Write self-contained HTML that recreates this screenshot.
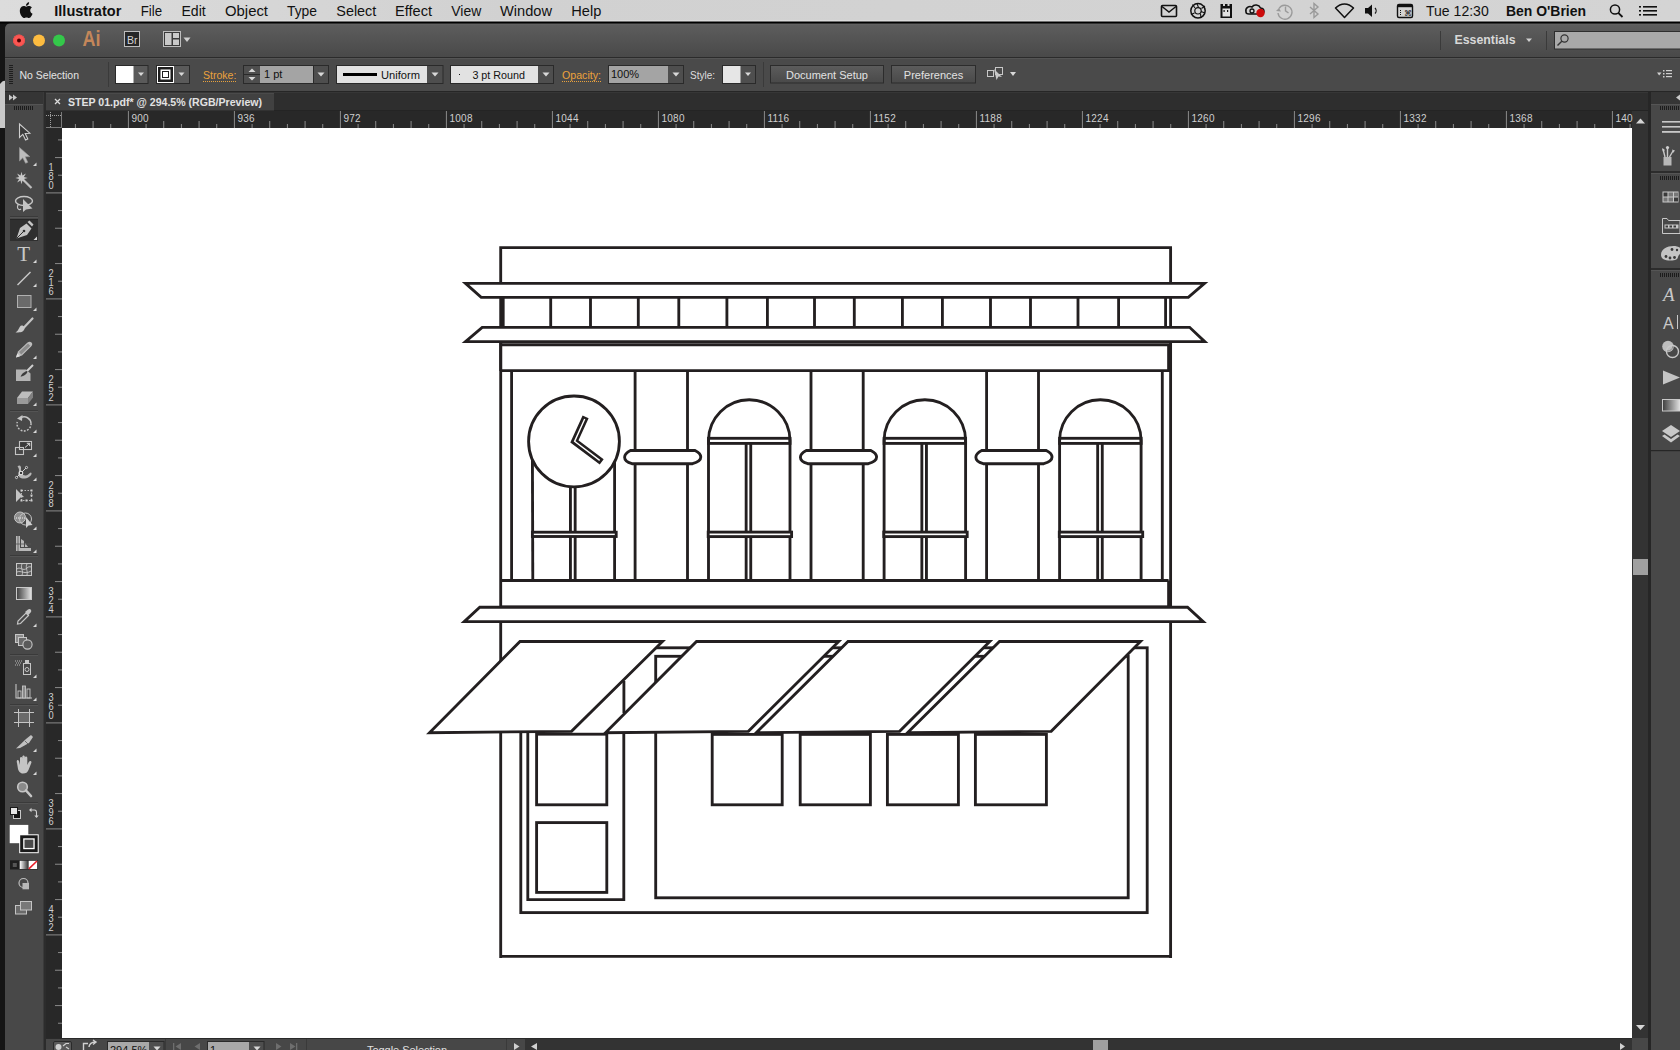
<!DOCTYPE html>
<html><head><meta charset="utf-8">
<style>
html,body{margin:0;padding:0;width:1680px;height:1050px;overflow:hidden;background:#141414;}
svg{display:block;position:absolute;left:0;top:0;font-family:"Liberation Sans",sans-serif;}

</style></head>
<body>
<svg width="1680" height="1050" viewBox="0 0 1680 1050" font-family="Liberation Sans, sans-serif">
<defs>
<linearGradient id="gMenu" x1="0" y1="0" x2="1" y2="0"><stop offset="0" stop-color="#dcdcdc"/><stop offset="0.3" stop-color="#d1d1d1"/><stop offset="1" stop-color="#d4d4d4"/></linearGradient>
<linearGradient id="gApp" x1="0" y1="0" x2="0" y2="1"><stop offset="0" stop-color="#5e5e5e"/><stop offset="1" stop-color="#494949"/></linearGradient>
<linearGradient id="gBtn" x1="0" y1="0" x2="0" y2="1"><stop offset="0" stop-color="#5c5c5c"/><stop offset="1" stop-color="#494949"/></linearGradient>
</defs>
<g id="chrome">
<rect x="0" y="22" width="1680" height="1028" fill="#151515"/><path d="M0,84 Q3,80 5,81 V128 H0 Z" fill="#c9c9c9"/>
<path d="M5,30 Q5,23 12,23 H1680 V1050 H5 Z" fill="#474747"/>
<path d="M5,30 Q5,23 12,23 H1680 V57 H5 Z" fill="url(#gApp)"/><rect x="10" y="23.5" width="1670" height="1" fill="#6a6a6a" opacity="0.6"/>
<rect x="5" y="57" width="1675" height="1" fill="#2b2b2b"/>
<!-- traffic lights -->
<circle cx="19" cy="40.5" r="6" fill="#fc605c"/>
<circle cx="19" cy="40.5" r="5.5" fill="#fc5753" stroke="#df4744" stroke-width="0.6"/>
<circle cx="19" cy="40.5" r="2" fill="#4d0000"/>
<circle cx="39" cy="40.5" r="6" fill="#fdbc40"/>
<circle cx="59" cy="40.5" r="6" fill="#34c84a"/>
<!-- Ai logo -->
<text x="82.5" y="46.3" font-size="22" fill="#c4875a" font-weight="bold" textLength="18" lengthAdjust="spacingAndGlyphs">Ai</text>
<!-- Br -->
<rect x="124.5" y="31.5" width="15" height="15" fill="#272727" stroke="#bdbdbd" stroke-width="1"/>
<text x="127" y="43.5" font-size="10.5" fill="#d6d6d6">Br</text>
<!-- layout icon -->
<rect x="163.5" y="31.5" width="17" height="15" fill="#3a3a3a" stroke="#bdbdbd" stroke-width="1"/>
<rect x="165" y="33" width="6.5" height="12" fill="#c9c9c9"/>
<rect x="173" y="33" width="6" height="5" fill="#c9c9c9"/>
<rect x="173" y="39.5" width="6" height="5.5" fill="#c9c9c9"/>
<path d="M183.5,37.5 H190.5 L187,42 Z" fill="#d0d0d0"/>
<!-- right app bar -->
<rect x="1440" y="31" width="1" height="19" fill="#3a3a3a"/>
<text x="1454.5" y="44" font-size="12.5" font-weight="bold" fill="#d8d8d8" textLength="61" lengthAdjust="spacingAndGlyphs">Essentials</text>
<path d="M1526,38.5 H1532 L1529,42 Z" fill="#d0d0d0"/>
<rect x="1546" y="31" width="1" height="19" fill="#3a3a3a"/>
<rect x="1554.5" y="31.5" width="130" height="17.5" fill="#a9a9a9" stroke="#2e2e2e" stroke-width="1"/>
<circle cx="1564.5" cy="38.5" r="3.6" fill="none" stroke="#333" stroke-width="1.2"/>
<path d="M1561.8,41.2 L1557.5,45.5" stroke="#333" stroke-width="1.4"/>

<!-- control bar -->
<rect x="5" y="58" width="1675" height="33" fill="#4a4a4a"/>
<rect x="5" y="58" width="1675" height="1" fill="#545454"/>
<rect x="5" y="91" width="1675" height="1" fill="#262626"/>
<g fill="#1e1e1e"><rect x="9" y="65" width="4" height="1"/><rect x="9" y="67" width="4" height="1"/><rect x="9" y="69" width="4" height="1"/><rect x="9" y="71" width="4" height="1"/><rect x="9" y="73" width="4" height="1"/><rect x="9" y="75" width="4" height="1"/><rect x="9" y="77" width="4" height="1"/><rect x="9" y="79" width="4" height="1"/><rect x="9" y="81" width="4" height="1"/><rect x="9" y="83" width="4" height="1"/></g>
<text x="19.5" y="78.5" font-size="11" fill="#e4e4e4" textLength="59.5" lengthAdjust="spacingAndGlyphs">No Selection</text>
<rect x="108" y="62" width="1" height="25" fill="#3a3a3a"/>
<!-- fill swatch -->
<rect x="115.5" y="65.5" width="32.5" height="18" fill="#5a5a5a" stroke="#2a2a2a" stroke-width="1"/>
<rect x="116" y="66" width="17.5" height="17" fill="#ffffff"/>
<path d="M138,72.5 H144 L141,76 Z" fill="#d8d8d8"/>
<!-- stroke swatch -->
<rect x="156.5" y="65.5" width="33" height="18" fill="#5a5a5a" stroke="#2a2a2a" stroke-width="1"/>
<rect x="157" y="66" width="17" height="17" fill="#ffffff"/>
<rect x="158" y="67" width="15" height="15" fill="#1e1e1e"/>
<rect x="160.5" y="69.5" width="10" height="10" fill="#ffffff"/>
<rect x="162" y="71" width="7" height="7" fill="#1e1e1e"/>
<rect x="163" y="72" width="5" height="5" fill="#ffffff"/>
<path d="M178.5,72.5 H184.5 L181.5,76 Z" fill="#d8d8d8"/>
<!-- Stroke label -->
<text x="203" y="78.5" font-size="11" fill="#eaa23c" textLength="33.4" lengthAdjust="spacingAndGlyphs">Stroke:</text>
<line x1="203" y1="81.5" x2="236" y2="81.5" stroke="#eaa23c" stroke-width="1" stroke-dasharray="1,1"/>
<rect x="243.5" y="65.5" width="85" height="18" fill="#4e4e4e" stroke="#2a2a2a" stroke-width="1"/>
<rect x="260" y="66" width="53" height="17" fill="#a4a4a4"/>
<path d="M248.5,72 H255.5 L252,68.5 Z" fill="#d6d6d6"/>
<path d="M248.5,77 H255.5 L252,80.5 Z" fill="#d6d6d6"/>
<rect x="244" y="74" width="16" height="1" fill="#2a2a2a"/>
<rect x="313" y="66" width="1" height="17" fill="#2a2a2a"/>
<text x="264" y="78" font-size="11" fill="#111">1 pt</text>
<path d="M317.5,72.5 H324.5 L321,76.5 Z" fill="#d8d8d8"/>
<!-- Uniform -->
<rect x="336.5" y="65.5" width="106.5" height="18" fill="#4e4e4e" stroke="#2a2a2a" stroke-width="1"/>
<rect x="337" y="66" width="90" height="17" fill="#e2e2e2"/>
<rect x="343" y="73" width="34" height="3" fill="#000"/>
<text x="381" y="78.5" font-size="11" fill="#111" textLength="39" lengthAdjust="spacingAndGlyphs">Uniform</text>
<path d="M431.5,72.5 H438.5 L435,76.5 Z" fill="#d8d8d8"/>
<!-- 3 pt Round -->
<rect x="450.5" y="65.5" width="103" height="18" fill="#4e4e4e" stroke="#2a2a2a" stroke-width="1"/>
<rect x="451" y="66" width="87" height="17" fill="#e2e2e2"/>
<rect x="459" y="74" width="1" height="1" fill="#111"/>
<text x="472.4" y="78.5" font-size="11" fill="#111" textLength="52.6" lengthAdjust="spacingAndGlyphs">3 pt Round</text>
<path d="M542.5,72.5 H549.5 L546,76.5 Z" fill="#d8d8d8"/>
<!-- Opacity -->
<text x="562" y="78.5" font-size="11" fill="#eaa23c" textLength="39" lengthAdjust="spacingAndGlyphs">Opacity:</text>
<line x1="562" y1="81.5" x2="601" y2="81.5" stroke="#eaa23c" stroke-width="1" stroke-dasharray="1,1"/>
<rect x="608.5" y="65.5" width="75" height="18" fill="#4e4e4e" stroke="#2a2a2a" stroke-width="1"/>
<rect x="609" y="66" width="59" height="17" fill="#a4a4a4"/>
<text x="611" y="78" font-size="11" fill="#111">100%</text>
<path d="M672.5,72.5 H679.5 L676,76.5 Z" fill="#d8d8d8"/>
<!-- Style -->
<text x="690" y="78.5" font-size="11" fill="#dedede" textLength="25" lengthAdjust="spacingAndGlyphs">Style:</text>
<rect x="722.5" y="65.5" width="33" height="18" fill="#4e4e4e" stroke="#2a2a2a" stroke-width="1"/>
<rect x="723" y="66" width="17.5" height="17" fill="#e6e6e6"/>
<path d="M745,72.5 H751 L748,76 Z" fill="#d8d8d8"/>
<rect x="763" y="62" width="1" height="25" fill="#3a3a3a"/>
<!-- buttons -->
<rect x="770.5" y="65.5" width="113" height="17.5" fill="url(#gBtn)" stroke="#2c2c2c" stroke-width="1"/>
<text x="827" y="78.5" font-size="11" fill="#e2e2e2" text-anchor="middle">Document Setup</text>
<rect x="891.5" y="65.5" width="84" height="17.5" fill="url(#gBtn)" stroke="#2c2c2c" stroke-width="1"/>
<text x="933.5" y="78.5" font-size="11" fill="#e2e2e2" text-anchor="middle">Preferences</text>
<!-- isolate icon -->
<g stroke="#c8c8c8" stroke-width="1" fill="none"><rect x="987.5" y="70.5" width="6" height="6"/><rect x="995.5" y="67.5" width="7" height="7"/></g>
<path d="M994,69 L1002,77 L998.5,76.5 L996.5,80 Z" fill="#c8c8c8"/>
<path d="M1010,72 H1016 L1013,76 Z" fill="#d8d8d8"/>
<!-- panel menu icon right -->
<path d="M1657,72.5 H1661.5 L1659.2,75.5 Z" fill="#cfcfcf"/>
<g fill="#cfcfcf"><rect x="1663" y="70" width="1.5" height="1.5"/><rect x="1663" y="73" width="1.5" height="1.5"/><rect x="1663" y="76" width="1.5" height="1.5"/><rect x="1666" y="70" width="6" height="1.2"/><rect x="1666" y="73" width="6" height="1.2"/><rect x="1666" y="76" width="6" height="1.2"/></g>

<!-- tab row -->
<rect x="5" y="92" width="1675" height="19" fill="#2e2e2e"/><rect x="46" y="92" width="1602" height="1" fill="#363636"/><rect x="46" y="110" width="1602" height="1" fill="#242424"/>
<rect x="46" y="93" width="228" height="17.5" fill="#414141"/><rect x="46" y="93" width="228" height="1" fill="#4a4a4a"/>
<path d="M55,99 L60,104 M60,99 L55,104" stroke="#dcdcdc" stroke-width="1.3"/>
<text x="68" y="105.5" font-size="11" font-weight="bold" fill="#e2e2e2" textLength="194" lengthAdjust="spacingAndGlyphs">STEP 01.pdf* @ 294.5% (RGB/Preview)</text>

<!-- left toolbar -->
<rect x="5" y="92" width="38" height="958" fill="#484848"/>
<rect x="5" y="92" width="38" height="12" fill="#353535"/>
<rect x="5" y="104" width="38" height="1" fill="#545454"/>
<path d="M9,94.5 L13,97.5 L9,100.5 Z M13,94.5 L17,97.5 L13,100.5 Z" fill="#c9c9c9"/>
<g fill="#1c1c1c"><rect x="14" y="106" width="1" height="4"/><rect x="16" y="106" width="1" height="4"/><rect x="18" y="106" width="1" height="4"/><rect x="20" y="106" width="1" height="4"/><rect x="22" y="106" width="1" height="4"/><rect x="24" y="106" width="1" height="4"/><rect x="26" y="106" width="1" height="4"/><rect x="28" y="106" width="1" height="4"/><rect x="30" y="106" width="1" height="4"/><rect x="32" y="106" width="1" height="4"/></g>
<rect x="43" y="92" width="3" height="958" fill="#2c2c2c"/>
<rect x="43" y="92" width="1" height="958" fill="#3a3a3a"/>

<!-- rulers -->
<rect x="46" y="111" width="1586" height="17" fill="#282828"/>
<rect x="46" y="111" width="16" height="927" fill="#282828"/>
<!-- canvas -->
<rect x="62" y="128" width="1570" height="910" fill="#ffffff"/>
<!-- right scrollbar -->
<rect x="1632" y="127" width="16" height="911" fill="#333333"/>
<rect x="1632" y="111" width="16" height="16" fill="#333333"/>
<path d="M1636,123.5 H1645 L1640.5,118.5 Z" fill="#d6d6d6"/>
<rect x="1633" y="559" width="15" height="16" fill="#a0a0a0"/>
<path d="M1636,1025 H1645 L1640.5,1030 Z" fill="#d6d6d6"/>
<rect x="1648" y="92" width="3" height="958" fill="#262626"/>
<!-- right dock -->
<rect x="1651" y="92" width="29" height="958" fill="#484848"/>
<rect x="1651" y="92" width="29" height="12" fill="#353535"/>
<path d="M1680,94.5 L1676,97.5 L1680,100.5 Z" fill="#c9c9c9"/>
<!-- status bar -->
<rect x="46" y="1038" width="1602" height="12" fill="#474747"/>
<rect x="46" y="1038" width="1602" height="1" fill="#2a2a2a"/>
<rect x="525" y="1039" width="1107" height="11" fill="#333333"/>
<rect x="1093" y="1040" width="15" height="10" fill="#a0a0a0"/>
<path d="M1620,1043 V1050 L1625,1046.5 Z" fill="#d0d0d0"/>
<path d="M537,1043 V1050 L531,1046.5 Z" fill="#d0d0d0"/>
<rect x="1632" y="1038" width="16" height="12" fill="#474747"/>
<!-- status items -->
<rect x="53.5" y="1041.5" width="18" height="10" rx="1.5" fill="#5a5a5a" stroke="#2a2a2a" stroke-width="1"/>
<circle cx="58.5" cy="1047" r="3" fill="#d0d0d0"/><path d="M63,1046 L66,1043.5 M66,1043.5 H69 M66,1047 L69,1049" stroke="#d0d0d0" stroke-width="1.2"/>
<path d="M83.5,1050 V1043.5 H88 M89,1047 C89,1044 92,1042 95,1042 M93,1040 L96,1042 L93,1044.5" fill="none" stroke="#d0d0d0" stroke-width="1.4"/>
<rect x="107.5" y="1041.5" width="56.5" height="10" fill="#4e4e4e" stroke="#2a2a2a" stroke-width="1"/>
<rect x="108" y="1042" width="41" height="9" fill="#a8a8a8"/>
<text x="110" y="1054" font-size="11" fill="#111">294.5%</text>
<path d="M153.5,1046.5 H160.5 L157,1050.5 Z" fill="#d8d8d8"/>
<rect x="165" y="1039" width="1" height="11" fill="#3a3a3a"/>
<g fill="#6e6e6e"><rect x="173" y="1043" width="1.3" height="7"/><path d="M181,1043 V1050 L175.5,1046.5 Z"/><path d="M200,1043 V1050 L194.5,1046.5 Z"/><path d="M276,1043 V1050 L281.5,1046.5 Z"/><path d="M290,1043 V1050 L295.5,1046.5 Z"/><rect x="296" y="1043" width="1.3" height="7"/></g>
<rect x="207.5" y="1041.5" width="56.5" height="10" fill="#4e4e4e" stroke="#2a2a2a" stroke-width="1"/>
<rect x="208" y="1042" width="41" height="9" fill="#a8a8a8"/>
<text x="210" y="1054" font-size="11" fill="#111">1</text>
<path d="M253.5,1046.5 H260.5 L257,1050.5 Z" fill="#d8d8d8"/>
<rect x="306" y="1039" width="1" height="11" fill="#3a3a3a"/>
<text x="367" y="1054" font-size="11" fill="#e0e0e0" textLength="80">Toggle Selection</text>
<rect x="506" y="1039" width="1" height="11" fill="#3a3a3a"/>
<path d="M514,1043 V1050 L519.5,1046.5 Z" fill="#d0d0d0"/>
</g>
<g id="rulers">
<rect x="74.90" y="124" width="1" height="4" fill="#8a8a8a"/>
<rect x="92.57" y="121" width="1" height="7" fill="#8a8a8a"/>
<rect x="110.23" y="124" width="1" height="4" fill="#8a8a8a"/>
<rect x="127.90" y="111" width="1" height="17" fill="#8a8a8a"/>
<rect x="145.57" y="124" width="1" height="4" fill="#8a8a8a"/>
<rect x="163.23" y="121" width="1" height="7" fill="#8a8a8a"/>
<rect x="180.90" y="124" width="1" height="4" fill="#8a8a8a"/>
<rect x="198.57" y="121" width="1" height="7" fill="#8a8a8a"/>
<rect x="216.23" y="124" width="1" height="4" fill="#8a8a8a"/>
<text x="131.4" y="122" font-size="10" fill="#cfcfcf" letter-spacing="0.3">900</text>
<rect x="233.90" y="111" width="1" height="17" fill="#8a8a8a"/>
<rect x="251.57" y="124" width="1" height="4" fill="#8a8a8a"/>
<rect x="269.23" y="121" width="1" height="7" fill="#8a8a8a"/>
<rect x="286.90" y="124" width="1" height="4" fill="#8a8a8a"/>
<rect x="304.57" y="121" width="1" height="7" fill="#8a8a8a"/>
<rect x="322.23" y="124" width="1" height="4" fill="#8a8a8a"/>
<text x="237.4" y="122" font-size="10" fill="#cfcfcf" letter-spacing="0.3">936</text>
<rect x="339.90" y="111" width="1" height="17" fill="#8a8a8a"/>
<rect x="357.57" y="124" width="1" height="4" fill="#8a8a8a"/>
<rect x="375.23" y="121" width="1" height="7" fill="#8a8a8a"/>
<rect x="392.90" y="124" width="1" height="4" fill="#8a8a8a"/>
<rect x="410.57" y="121" width="1" height="7" fill="#8a8a8a"/>
<rect x="428.23" y="124" width="1" height="4" fill="#8a8a8a"/>
<text x="343.4" y="122" font-size="10" fill="#cfcfcf" letter-spacing="0.3">972</text>
<rect x="445.90" y="111" width="1" height="17" fill="#8a8a8a"/>
<rect x="463.57" y="124" width="1" height="4" fill="#8a8a8a"/>
<rect x="481.23" y="121" width="1" height="7" fill="#8a8a8a"/>
<rect x="498.90" y="124" width="1" height="4" fill="#8a8a8a"/>
<rect x="516.57" y="121" width="1" height="7" fill="#8a8a8a"/>
<rect x="534.23" y="124" width="1" height="4" fill="#8a8a8a"/>
<text x="449.4" y="122" font-size="10" fill="#cfcfcf" letter-spacing="0.3">1008</text>
<rect x="551.90" y="111" width="1" height="17" fill="#8a8a8a"/>
<rect x="569.57" y="124" width="1" height="4" fill="#8a8a8a"/>
<rect x="587.23" y="121" width="1" height="7" fill="#8a8a8a"/>
<rect x="604.90" y="124" width="1" height="4" fill="#8a8a8a"/>
<rect x="622.57" y="121" width="1" height="7" fill="#8a8a8a"/>
<rect x="640.23" y="124" width="1" height="4" fill="#8a8a8a"/>
<text x="555.4" y="122" font-size="10" fill="#cfcfcf" letter-spacing="0.3">1044</text>
<rect x="657.90" y="111" width="1" height="17" fill="#8a8a8a"/>
<rect x="675.57" y="124" width="1" height="4" fill="#8a8a8a"/>
<rect x="693.23" y="121" width="1" height="7" fill="#8a8a8a"/>
<rect x="710.90" y="124" width="1" height="4" fill="#8a8a8a"/>
<rect x="728.57" y="121" width="1" height="7" fill="#8a8a8a"/>
<rect x="746.23" y="124" width="1" height="4" fill="#8a8a8a"/>
<text x="661.4" y="122" font-size="10" fill="#cfcfcf" letter-spacing="0.3">1080</text>
<rect x="763.90" y="111" width="1" height="17" fill="#8a8a8a"/>
<rect x="781.57" y="124" width="1" height="4" fill="#8a8a8a"/>
<rect x="799.23" y="121" width="1" height="7" fill="#8a8a8a"/>
<rect x="816.90" y="124" width="1" height="4" fill="#8a8a8a"/>
<rect x="834.57" y="121" width="1" height="7" fill="#8a8a8a"/>
<rect x="852.23" y="124" width="1" height="4" fill="#8a8a8a"/>
<text x="767.4" y="122" font-size="10" fill="#cfcfcf" letter-spacing="0.3">1116</text>
<rect x="869.90" y="111" width="1" height="17" fill="#8a8a8a"/>
<rect x="887.57" y="124" width="1" height="4" fill="#8a8a8a"/>
<rect x="905.23" y="121" width="1" height="7" fill="#8a8a8a"/>
<rect x="922.90" y="124" width="1" height="4" fill="#8a8a8a"/>
<rect x="940.57" y="121" width="1" height="7" fill="#8a8a8a"/>
<rect x="958.23" y="124" width="1" height="4" fill="#8a8a8a"/>
<text x="873.4" y="122" font-size="10" fill="#cfcfcf" letter-spacing="0.3">1152</text>
<rect x="975.90" y="111" width="1" height="17" fill="#8a8a8a"/>
<rect x="993.57" y="124" width="1" height="4" fill="#8a8a8a"/>
<rect x="1011.23" y="121" width="1" height="7" fill="#8a8a8a"/>
<rect x="1028.90" y="124" width="1" height="4" fill="#8a8a8a"/>
<rect x="1046.57" y="121" width="1" height="7" fill="#8a8a8a"/>
<rect x="1064.23" y="124" width="1" height="4" fill="#8a8a8a"/>
<text x="979.4" y="122" font-size="10" fill="#cfcfcf" letter-spacing="0.3">1188</text>
<rect x="1081.90" y="111" width="1" height="17" fill="#8a8a8a"/>
<rect x="1099.57" y="124" width="1" height="4" fill="#8a8a8a"/>
<rect x="1117.23" y="121" width="1" height="7" fill="#8a8a8a"/>
<rect x="1134.90" y="124" width="1" height="4" fill="#8a8a8a"/>
<rect x="1152.57" y="121" width="1" height="7" fill="#8a8a8a"/>
<rect x="1170.23" y="124" width="1" height="4" fill="#8a8a8a"/>
<text x="1085.4" y="122" font-size="10" fill="#cfcfcf" letter-spacing="0.3">1224</text>
<rect x="1187.90" y="111" width="1" height="17" fill="#8a8a8a"/>
<rect x="1205.57" y="124" width="1" height="4" fill="#8a8a8a"/>
<rect x="1223.23" y="121" width="1" height="7" fill="#8a8a8a"/>
<rect x="1240.90" y="124" width="1" height="4" fill="#8a8a8a"/>
<rect x="1258.57" y="121" width="1" height="7" fill="#8a8a8a"/>
<rect x="1276.23" y="124" width="1" height="4" fill="#8a8a8a"/>
<text x="1191.4" y="122" font-size="10" fill="#cfcfcf" letter-spacing="0.3">1260</text>
<rect x="1293.90" y="111" width="1" height="17" fill="#8a8a8a"/>
<rect x="1311.57" y="124" width="1" height="4" fill="#8a8a8a"/>
<rect x="1329.23" y="121" width="1" height="7" fill="#8a8a8a"/>
<rect x="1346.90" y="124" width="1" height="4" fill="#8a8a8a"/>
<rect x="1364.57" y="121" width="1" height="7" fill="#8a8a8a"/>
<rect x="1382.23" y="124" width="1" height="4" fill="#8a8a8a"/>
<text x="1297.4" y="122" font-size="10" fill="#cfcfcf" letter-spacing="0.3">1296</text>
<rect x="1399.90" y="111" width="1" height="17" fill="#8a8a8a"/>
<rect x="1417.57" y="124" width="1" height="4" fill="#8a8a8a"/>
<rect x="1435.23" y="121" width="1" height="7" fill="#8a8a8a"/>
<rect x="1452.90" y="124" width="1" height="4" fill="#8a8a8a"/>
<rect x="1470.57" y="121" width="1" height="7" fill="#8a8a8a"/>
<rect x="1488.23" y="124" width="1" height="4" fill="#8a8a8a"/>
<text x="1403.4" y="122" font-size="10" fill="#cfcfcf" letter-spacing="0.3">1332</text>
<rect x="1505.90" y="111" width="1" height="17" fill="#8a8a8a"/>
<rect x="1523.57" y="124" width="1" height="4" fill="#8a8a8a"/>
<rect x="1541.23" y="121" width="1" height="7" fill="#8a8a8a"/>
<rect x="1558.90" y="124" width="1" height="4" fill="#8a8a8a"/>
<rect x="1576.57" y="121" width="1" height="7" fill="#8a8a8a"/>
<rect x="1594.23" y="124" width="1" height="4" fill="#8a8a8a"/>
<text x="1509.4" y="122" font-size="10" fill="#cfcfcf" letter-spacing="0.3">1368</text>
<rect x="1611.90" y="111" width="1" height="17" fill="#8a8a8a"/>
<rect x="1629.57" y="124" width="1" height="4" fill="#8a8a8a"/>
<text x="1615.4" y="122" font-size="10" fill="#cfcfcf" letter-spacing="0.3">140</text>
<rect x="58" y="139.40" width="4" height="1" fill="#8a8a8a"/>
<rect x="55" y="157.07" width="7" height="1" fill="#8a8a8a"/>
<rect x="58" y="174.73" width="4" height="1" fill="#8a8a8a"/>
<rect x="46" y="192.40" width="16" height="1" fill="#8a8a8a"/>
<rect x="58" y="210.07" width="4" height="1" fill="#8a8a8a"/>
<rect x="55" y="227.73" width="7" height="1" fill="#8a8a8a"/>
<rect x="58" y="245.40" width="4" height="1" fill="#8a8a8a"/>
<rect x="55" y="263.07" width="7" height="1" fill="#8a8a8a"/>
<rect x="58" y="280.73" width="4" height="1" fill="#8a8a8a"/>
<text transform="translate(48.6,170.80) scale(0.8,1)" font-size="11.6" fill="#cfcfcf">1</text>
<text transform="translate(48.6,179.95) scale(0.8,1)" font-size="11.6" fill="#cfcfcf">8</text>
<text transform="translate(48.6,189.10) scale(0.8,1)" font-size="11.6" fill="#cfcfcf">0</text>
<rect x="46" y="298.40" width="16" height="1" fill="#8a8a8a"/>
<rect x="58" y="316.07" width="4" height="1" fill="#8a8a8a"/>
<rect x="55" y="333.73" width="7" height="1" fill="#8a8a8a"/>
<rect x="58" y="351.40" width="4" height="1" fill="#8a8a8a"/>
<rect x="55" y="369.07" width="7" height="1" fill="#8a8a8a"/>
<rect x="58" y="386.73" width="4" height="1" fill="#8a8a8a"/>
<text transform="translate(48.6,276.80) scale(0.8,1)" font-size="11.6" fill="#cfcfcf">2</text>
<text transform="translate(48.6,285.95) scale(0.8,1)" font-size="11.6" fill="#cfcfcf">1</text>
<text transform="translate(48.6,295.10) scale(0.8,1)" font-size="11.6" fill="#cfcfcf">6</text>
<rect x="46" y="404.40" width="16" height="1" fill="#8a8a8a"/>
<rect x="58" y="422.07" width="4" height="1" fill="#8a8a8a"/>
<rect x="55" y="439.73" width="7" height="1" fill="#8a8a8a"/>
<rect x="58" y="457.40" width="4" height="1" fill="#8a8a8a"/>
<rect x="55" y="475.07" width="7" height="1" fill="#8a8a8a"/>
<rect x="58" y="492.73" width="4" height="1" fill="#8a8a8a"/>
<text transform="translate(48.6,382.80) scale(0.8,1)" font-size="11.6" fill="#cfcfcf">2</text>
<text transform="translate(48.6,391.95) scale(0.8,1)" font-size="11.6" fill="#cfcfcf">5</text>
<text transform="translate(48.6,401.10) scale(0.8,1)" font-size="11.6" fill="#cfcfcf">2</text>
<rect x="46" y="510.40" width="16" height="1" fill="#8a8a8a"/>
<rect x="58" y="528.07" width="4" height="1" fill="#8a8a8a"/>
<rect x="55" y="545.73" width="7" height="1" fill="#8a8a8a"/>
<rect x="58" y="563.40" width="4" height="1" fill="#8a8a8a"/>
<rect x="55" y="581.07" width="7" height="1" fill="#8a8a8a"/>
<rect x="58" y="598.73" width="4" height="1" fill="#8a8a8a"/>
<text transform="translate(48.6,488.80) scale(0.8,1)" font-size="11.6" fill="#cfcfcf">2</text>
<text transform="translate(48.6,497.95) scale(0.8,1)" font-size="11.6" fill="#cfcfcf">8</text>
<text transform="translate(48.6,507.10) scale(0.8,1)" font-size="11.6" fill="#cfcfcf">8</text>
<rect x="46" y="616.40" width="16" height="1" fill="#8a8a8a"/>
<rect x="58" y="634.07" width="4" height="1" fill="#8a8a8a"/>
<rect x="55" y="651.73" width="7" height="1" fill="#8a8a8a"/>
<rect x="58" y="669.40" width="4" height="1" fill="#8a8a8a"/>
<rect x="55" y="687.07" width="7" height="1" fill="#8a8a8a"/>
<rect x="58" y="704.73" width="4" height="1" fill="#8a8a8a"/>
<text transform="translate(48.6,594.80) scale(0.8,1)" font-size="11.6" fill="#cfcfcf">3</text>
<text transform="translate(48.6,603.95) scale(0.8,1)" font-size="11.6" fill="#cfcfcf">2</text>
<text transform="translate(48.6,613.10) scale(0.8,1)" font-size="11.6" fill="#cfcfcf">4</text>
<rect x="46" y="722.40" width="16" height="1" fill="#8a8a8a"/>
<rect x="58" y="740.07" width="4" height="1" fill="#8a8a8a"/>
<rect x="55" y="757.73" width="7" height="1" fill="#8a8a8a"/>
<rect x="58" y="775.40" width="4" height="1" fill="#8a8a8a"/>
<rect x="55" y="793.07" width="7" height="1" fill="#8a8a8a"/>
<rect x="58" y="810.73" width="4" height="1" fill="#8a8a8a"/>
<text transform="translate(48.6,700.80) scale(0.8,1)" font-size="11.6" fill="#cfcfcf">3</text>
<text transform="translate(48.6,709.95) scale(0.8,1)" font-size="11.6" fill="#cfcfcf">6</text>
<text transform="translate(48.6,719.10) scale(0.8,1)" font-size="11.6" fill="#cfcfcf">0</text>
<rect x="46" y="828.40" width="16" height="1" fill="#8a8a8a"/>
<rect x="58" y="846.07" width="4" height="1" fill="#8a8a8a"/>
<rect x="55" y="863.73" width="7" height="1" fill="#8a8a8a"/>
<rect x="58" y="881.40" width="4" height="1" fill="#8a8a8a"/>
<rect x="55" y="899.07" width="7" height="1" fill="#8a8a8a"/>
<rect x="58" y="916.73" width="4" height="1" fill="#8a8a8a"/>
<text transform="translate(48.6,806.80) scale(0.8,1)" font-size="11.6" fill="#cfcfcf">3</text>
<text transform="translate(48.6,815.95) scale(0.8,1)" font-size="11.6" fill="#cfcfcf">9</text>
<text transform="translate(48.6,825.10) scale(0.8,1)" font-size="11.6" fill="#cfcfcf">6</text>
<rect x="46" y="934.40" width="16" height="1" fill="#8a8a8a"/>
<rect x="58" y="952.07" width="4" height="1" fill="#8a8a8a"/>
<rect x="55" y="969.73" width="7" height="1" fill="#8a8a8a"/>
<rect x="58" y="987.40" width="4" height="1" fill="#8a8a8a"/>
<rect x="55" y="1005.07" width="7" height="1" fill="#8a8a8a"/>
<rect x="58" y="1022.73" width="4" height="1" fill="#8a8a8a"/>
<text transform="translate(48.6,912.80) scale(0.8,1)" font-size="11.6" fill="#cfcfcf">4</text>
<text transform="translate(48.6,921.95) scale(0.8,1)" font-size="11.6" fill="#cfcfcf">3</text>
<text transform="translate(48.6,931.10) scale(0.8,1)" font-size="11.6" fill="#cfcfcf">2</text>
<rect x="46" y="111" width="16" height="17" fill="#282828"/>
<path d="M46,115.5 H61 M50.5,112 V127" stroke="#a0a0a0" stroke-width="1" stroke-dasharray="1,1"/>
<rect x="46" y="127" width="16" height="1" fill="#7a7a7a"/><rect x="61" y="112" width="1" height="16" fill="#7a7a7a"/>
</g><g id="building" stroke="#231f20" fill="none" stroke-linejoin="miter" stroke-miterlimit="10">
<path d="M500.7,283.5 V247.6 H1170.6 V283.5" stroke-width="2.85" fill="none"/>
<line x1="500.7" y1="283" x2="500.7" y2="328" stroke-width="2.85"/>
<line x1="1170.6" y1="283" x2="1170.6" y2="328" stroke-width="2.85"/>
<line x1="503.2" y1="297" x2="503.2" y2="327.5" stroke-width="2.85"/>
<line x1="550.7" y1="297" x2="550.7" y2="327.5" stroke-width="2.85"/>
<line x1="590.5" y1="297" x2="590.5" y2="327.5" stroke-width="2.85"/>
<line x1="638.3" y1="297" x2="638.3" y2="327.5" stroke-width="2.85"/>
<line x1="678.8" y1="297" x2="678.8" y2="327.5" stroke-width="2.85"/>
<line x1="726.9" y1="297" x2="726.9" y2="327.5" stroke-width="2.85"/>
<line x1="767.4" y1="297" x2="767.4" y2="327.5" stroke-width="2.85"/>
<line x1="814.5" y1="297" x2="814.5" y2="327.5" stroke-width="2.85"/>
<line x1="854.3" y1="297" x2="854.3" y2="327.5" stroke-width="2.85"/>
<line x1="902.4" y1="297" x2="902.4" y2="327.5" stroke-width="2.85"/>
<line x1="942.4" y1="297" x2="942.4" y2="327.5" stroke-width="2.85"/>
<line x1="990.5" y1="297" x2="990.5" y2="327.5" stroke-width="2.85"/>
<line x1="1030.5" y1="297" x2="1030.5" y2="327.5" stroke-width="2.85"/>
<line x1="1078" y1="297" x2="1078" y2="327.5" stroke-width="2.85"/>
<line x1="1118.6" y1="297" x2="1118.6" y2="327.5" stroke-width="2.85"/>
<line x1="1165.6" y1="297" x2="1165.6" y2="327.5" stroke-width="2.85"/>
<path d="M465.5,283.3 H1204.5 L1188.3,297.3 H481.2 Z" stroke-width="2.85" fill="#fff"/>
<path d="M482.2,327.3 H1189.6 L1204.8,341.6 H465.5 Z" stroke-width="2.85" fill="#fff"/>
<path d="M500.7,343 V371 M500.7,344.7 H1168.6 V370.6" stroke-width="2.85" fill="none"/>
<line x1="1170.6" y1="341" x2="1170.6" y2="958" stroke-width="2.85"/>
<line x1="500.7" y1="341" x2="500.7" y2="958" stroke-width="2.85"/>
<line x1="500.7" y1="370.6" x2="1170.6" y2="370.6" stroke-width="2.85"/>
<line x1="500.7" y1="580.5" x2="1168.6" y2="580.5" stroke-width="2.85"/>
<line x1="511.6" y1="370.6" x2="511.6" y2="580.5" stroke-width="2.85"/>
<line x1="1162.3" y1="370.6" x2="1162.3" y2="580.5" stroke-width="2.85"/>
<line x1="635.1" y1="370.6" x2="635.1" y2="580.5" stroke-width="2.85"/>
<line x1="687.5" y1="370.6" x2="687.5" y2="580.5" stroke-width="2.85"/>
<line x1="811.0" y1="370.6" x2="811.0" y2="580.5" stroke-width="2.85"/>
<line x1="863.2" y1="370.6" x2="863.2" y2="580.5" stroke-width="2.85"/>
<line x1="986.6" y1="370.6" x2="986.6" y2="580.5" stroke-width="2.85"/>
<line x1="1038.5" y1="370.6" x2="1038.5" y2="580.5" stroke-width="2.85"/>
<path d="M630.50,450.5 H695.00 C699.50,452.8 700.80,455 700.80,457 C700.80,459.6 697.50,462.3 692.50,463.7 H632.00 C627.50,462.4 624.60,459.8 624.60,457.2 C624.60,455 626.50,452.6 630.50,450.5 Z" stroke-width="2.85" fill="#fff"/>
<path d="M806.30,450.5 H870.80 C875.30,452.8 876.60,455 876.60,457 C876.60,459.6 873.30,462.3 868.30,463.7 H807.80 C803.30,462.4 800.40,459.8 800.40,457.2 C800.40,455 802.30,452.6 806.30,450.5 Z" stroke-width="2.85" fill="#fff"/>
<path d="M981.75,450.5 H1046.25 C1050.75,452.8 1052.05,455 1052.05,457 C1052.05,459.6 1048.75,462.3 1043.75,463.7 H983.25 C978.75,462.4 975.85,459.8 975.85,457.2 C975.85,455 977.75,452.6 981.75,450.5 Z" stroke-width="2.85" fill="#fff"/>
<path d="M708.50,580.5 V440.5 A40.75,40.75 0 0 1 790.00,440.5 V580.5" stroke-width="2.85" fill="none"/>
<rect x="708.5" y="438.3" width="81.5" height="5.099999999999966" stroke-width="2.85" fill="none"/>
<line x1="746.1500000000001" y1="443.4" x2="746.1500000000001" y2="580.5" stroke-width="2.85"/>
<line x1="750.75" y1="443.4" x2="750.75" y2="580.5" stroke-width="2.85"/>
<rect x="708.2" y="532.1" width="83.39999999999998" height="4.5" stroke-width="2.85" fill="#fff"/>
<path d="M884.10,580.5 V440.5 A40.75,40.75 0 0 1 965.60,440.5 V580.5" stroke-width="2.85" fill="none"/>
<rect x="884.1" y="438.3" width="81.5" height="5.099999999999966" stroke-width="2.85" fill="none"/>
<line x1="921.85" y1="443.4" x2="921.85" y2="580.5" stroke-width="2.85"/>
<line x1="926.4499999999999" y1="443.4" x2="926.4499999999999" y2="580.5" stroke-width="2.85"/>
<rect x="883.8000000000001" y="532.1" width="83.39999999999998" height="4.5" stroke-width="2.85" fill="#fff"/>
<path d="M1059.60,580.5 V440.5 A40.75,40.75 0 0 1 1141.10,440.5 V580.5" stroke-width="2.85" fill="none"/>
<rect x="1059.6" y="438.3" width="81.5" height="5.099999999999966" stroke-width="2.85" fill="none"/>
<line x1="1097.67" y1="443.4" x2="1097.67" y2="580.5" stroke-width="2.85"/>
<line x1="1102.27" y1="443.4" x2="1102.27" y2="580.5" stroke-width="2.85"/>
<rect x="1059.3" y="532.1" width="83.39999999999986" height="4.5" stroke-width="2.85" fill="#fff"/>
<line x1="532.4" y1="455" x2="532.8" y2="580.5" stroke-width="2.85"/>
<line x1="614.6" y1="458" x2="614.6" y2="580.5" stroke-width="2.85"/>
<line x1="570.4399999999999" y1="486" x2="570.4399999999999" y2="580.5" stroke-width="2.85"/>
<line x1="575.16" y1="486" x2="575.16" y2="580.5" stroke-width="2.85"/>
<rect x="532.4" y="532.2" width="83.80000000000007" height="4.2999999999999545" stroke-width="2.85" fill="#fff"/>
<circle cx="574" cy="441.4" r="45.4" stroke-width="2.85" fill="#fff"/>
<polyline points="585.6,416.8 574.4,441.5 601.7,461.9" stroke-width="6.6" fill="none" stroke-linejoin="miter"/>
<polyline points="584.7,419.0 574.6,441.4 599.7,460.4" stroke="#fff" stroke-width="1.4" fill="none" stroke-linejoin="miter"/>
<path d="M500.7,607 H1168.6 V580.5" stroke-width="2.85" fill="none"/>
<path d="M479.8,607.2 H1187.5 L1203.2,621.6 H464.2 Z" stroke-width="2.85" fill="#fff"/>
<path d="M500.7,956.3 H1170.6" stroke-width="2.85" fill="none"/>
<rect x="520.8" y="647.8" width="626.4000000000001" height="264.80000000000007" stroke-width="2.85" fill="none"/>
<path d="M527.8,731 V899.6 H623.8 V731" stroke-width="2.85" fill="none"/>
<rect x="655.7" y="656.3" width="472.5" height="241.5" stroke-width="2.85" fill="none"/>
<rect x="536.6" y="734.2" width="70.19999999999993" height="70.59999999999991" stroke-width="2.85" fill="none"/>
<rect x="536.6" y="822.6" width="70.19999999999993" height="69.79999999999995" stroke-width="2.85" fill="none"/>
<rect x="712.2" y="734.4" width="70.0" height="70.39999999999998" stroke-width="2.85" fill="none"/>
<rect x="800.2" y="734.4" width="70.19999999999993" height="70.39999999999998" stroke-width="2.85" fill="none"/>
<rect x="887.4" y="734.4" width="71.0" height="70.39999999999998" stroke-width="2.85" fill="none"/>
<rect x="975.4" y="734.4" width="71.00000000000011" height="70.39999999999998" stroke-width="2.85" fill="none"/>
<line x1="623.9" y1="681" x2="623.9" y2="713" stroke-width="2.85"/>
<path d="M520.0,641.5 H662.5 L571.5,731.3 L429.5,732.7 Z" stroke-width="2.85" fill="#fff"/>
<path d="M696.5,641.5 H838.7 L748.4,731.3 L605.5,732.7 Z" stroke-width="2.85" fill="#fff"/>
<path d="M848.0,641.5 H989.8 L899.6,731.3 L756.2,732.7 Z" stroke-width="2.85" fill="#fff"/>
<path d="M999.5,641.5 H1140.5 L1051.2,731.3 L907.5,732.7 Z" stroke-width="2.85" fill="#fff"/>
</g><g id="tools">
<path d="M19.5,124 V137.5 L22.8,134.3 L25.6,140 L27.8,139 L25.2,133.4 L29.8,133.2 Z" fill="#3a3a3a" stroke="#d0d0d0" stroke-width="1.1" stroke-linejoin="miter"/>
<path d="M19.5,147.5 V161 L22.8,157.8 L25.6,163.3 L27.8,162.3 L25.2,156.8 L29.8,156.6 Z" fill="#bcbcbc" stroke="#9a9a9a" stroke-width="0.6"/>
<path d="M36.5,162.5 V166 H33 Z" fill="#d8d8d8"/>
<path d="M22,178.5 L31.5,188" stroke="#bdbdbd" stroke-width="2.2"/><polygon points="21.50,171.80 22.49,175.60 25.88,173.62 23.90,177.01 27.70,178.00 23.90,178.99 25.88,182.38 22.49,180.40 21.50,184.20 20.51,180.40 17.12,182.38 19.10,178.99 15.30,178.00 19.10,177.01 17.12,173.62 20.51,175.60" fill="#c8c8c8"/>
<path d="M24,211 C19,206 27,202 31,208 Z" fill="none"/><ellipse cx="24" cy="201" rx="8.5" ry="4.5" fill="none" stroke="#c6c6c6" stroke-width="1.4"/><path d="M18.5,204 C16,208 19,211 21,209" fill="none" stroke="#c6c6c6" stroke-width="1.2"/><path d="M23,199 V212 L26,209.5 L32.5,208.5 Z" fill="#c4c4c4"/>
<rect x="10" y="216" width="28" height="1" fill="#3a3a3a"/><rect x="10" y="217" width="28" height="1" fill="#545454"/>
<rect x="10" y="219" width="28" height="22" fill="#2f2f2f"/><rect x="10" y="219" width="28" height="1" fill="#262626"/>
<path d="M16.5,238.5 L20,228 L26.5,223.5 L31.5,228.5 L27,235 Z" fill="#c4c4c4"/><path d="M27.5,222 L29.5,220.5 L33.5,224.5 L32,226.5 Z" fill="#c4c4c4"/><path d="M16.5,238.5 L23.5,231.5" stroke="#2f2f2f" stroke-width="1"/><circle cx="24" cy="231" r="1.3" fill="#2f2f2f"/>
<path d="M37.0,236.5 V240 H33.5 Z" fill="#d8d8d8"/>
<text x="17.3" y="260.8" font-family="Liberation Serif" font-size="21" fill="#c8c8c8">T</text>
<path d="M36.5,259.5 V263 H33 Z" fill="#d8d8d8"/>
<path d="M17.5,285 L30.5,272" stroke="#c8c8c8" stroke-width="1.4"/>
<path d="M36.5,283.5 V287 H33 Z" fill="#d8d8d8"/>
<defs><linearGradient id="gTool" x1="0" y1="0" x2="1" y2="1"><stop offset="0" stop-color="#8a8a8a"/><stop offset="1" stop-color="#5a5a5a"/></linearGradient><linearGradient id="gGrad" x1="0" y1="0" x2="1" y2="0"><stop offset="0" stop-color="#3c3c3c"/><stop offset="1" stop-color="#e6e6e6"/></linearGradient></defs>
<rect x="17.5" y="295.5" width="13.5" height="12" fill="#6a6a6a" stroke="#b0b0b0" stroke-width="1"/>
<path d="M36.5,307.5 V311 H33 Z" fill="#d8d8d8"/>
<path d="M32.5,318.5 L23.5,328" stroke="#c4c4c4" stroke-width="2.2" stroke-linecap="round"/><path d="M15.5,332.5 C19,332.5 22.5,332.5 24,330 C25.5,327.5 23.5,325 21.5,325.5 C19,326 19.5,330 15.5,332.5 Z" fill="#c8c8c8"/>
<path d="M16,357.5 L18,351.5 L27.5,342.5 C29,341.3 30.5,341.5 31.5,342.5 C32.5,343.5 32.5,345 31.3,346.3 L22,355.5 Z" fill="#bdbdbd"/><path d="M19,352 L28,343.5 L30.3,345.8 L21.3,354.5 Z" fill="#8c8c8c"/><path d="M16,357.5 L17.3,353.5 L20,356.2 Z" fill="#dedede"/>
<path d="M36.5,355.5 V359 H33 Z" fill="#d8d8d8"/>
<path d="M16,369.5 H26 L30.5,373.5 V381 H16 Z" fill="#b4b4b4"/><path d="M20.5,376.5 C22.5,372.5 25.5,371.5 28,370.5 C27,374 24,376.5 20.5,376.5 Z" fill="#3c3c3c"/><path d="M27,371 L33,365" stroke="#cfcfcf" stroke-width="2"/>
<path d="M17,398 L22,391.5 H33 L28,398 Z" fill="#bdbdbd"/><path d="M17,398 H28 V404 H17 Z" fill="#9a9a9a"/><path d="M28,398 L33,391.5 V397.5 L28,404 Z" fill="#808080"/>
<path d="M36.5,402.5 V406 H33 Z" fill="#d8d8d8"/>
<rect x="10" y="410" width="28" height="1" fill="#3a3a3a"/><rect x="10" y="411" width="28" height="1" fill="#545454"/>
<path d="M21,417.5 A7,7 0 0 1 31,423.3" fill="none" stroke="#c4c4c4" stroke-width="1.5"/><path d="M31,423.3 A7,7 0 1 1 17.3,422" fill="none" stroke="#c4c4c4" stroke-width="1.5" stroke-dasharray="1.8,1.5"/><path d="M17,418.5 L22.5,415 L22,421 Z" fill="#c4c4c4"/>
<path d="M36.5,429.5 V433 H33 Z" fill="#d8d8d8"/>
<rect x="19.5" y="441.5" width="12" height="8" fill="#3a3a3a" stroke="#c4c4c4" stroke-width="1.1"/><rect x="15.5" y="447.5" width="8" height="7" fill="none" stroke="#c4c4c4" stroke-width="1.1"/><path d="M25,447.5 L29.5,443.5 M26.8,443.3 H29.7 V446.2" fill="none" stroke="#dadada" stroke-width="1"/>
<path d="M36.5,453.5 V457 H33 Z" fill="#d8d8d8"/>
<path d="M17.5,466.5 C19.5,464.5 21.5,466 21,469 C20.5,472 22.5,476 26,475.5 C28.5,475 30.5,471 31.5,473 C32,475 29,478 25,478.5 C21,479 17.5,477 18.5,473 C19.5,470 19,468 17.5,466.5 Z" fill="#b8b8b8"/><path d="M16.5,477.5 L27,467" stroke="#dedede" stroke-width="0.9"/><circle cx="21" cy="473" r="1.8" fill="#3a3a3a" stroke="#e6e6e6" stroke-width="1.1"/><circle cx="16.5" cy="477.5" r="1.1" fill="#3a3a3a" stroke="#e6e6e6" stroke-width="0.8"/><circle cx="26.5" cy="467.5" r="1.1" fill="#3a3a3a" stroke="#e6e6e6" stroke-width="0.8"/>
<path d="M36.5,477.5 V481 H33 Z" fill="#d8d8d8"/>
<rect x="21.5" y="490.5" width="10" height="10" fill="none" stroke="#c4c4c4" stroke-width="0.9" stroke-dasharray="1.5,1.5"/><g fill="#d0d0d0"><rect x="20.5" y="489.5" width="2" height="2"/><rect x="30.5" y="489.5" width="2" height="2"/><rect x="20.5" y="499.5" width="2" height="2"/><rect x="30.5" y="499.5" width="2" height="2"/><rect x="25.5" y="499.5" width="2" height="2"/><rect x="30.5" y="494.5" width="2" height="2"/></g><path d="M16,489 L24,497 L20.5,497.5 L16,502 Z" fill="#c4c4c4"/>
<circle cx="20" cy="517.5" r="5.5" fill="#8e8e8e" stroke="#c4c4c4" stroke-width="1"/><circle cx="25.5" cy="519" r="6" fill="none" stroke="#c4c4c4" stroke-width="1"/><path d="M16,518 H25" stroke="#eee" stroke-width="1.2" stroke-dasharray="1,1"/><path d="M26,517 V528 L28.5,525.5 L32.5,525 Z" fill="#d0d0d0"/>
<path d="M36.5,526.5 V530 H33 Z" fill="#d8d8d8"/>
<path d="M16,536 V551 H31 V548 H20 V536 Z" fill="#b8b8b8"/><path d="M21,539 V547 H24 V541 Z M25,543 V547 H28 Z" fill="#b8b8b8"/><path d="M18,536 V551 M16,544 H31" stroke="#555" stroke-width="0.8"/>
<path d="M36.5,549.5 V553 H33 Z" fill="#d8d8d8"/>
<rect x="10" y="555" width="28" height="1" fill="#3a3a3a"/><rect x="10" y="556" width="28" height="1" fill="#545454"/>
<rect x="16.5" y="563.5" width="15" height="12" fill="#5a5a5a" stroke="#c8c8c8" stroke-width="1"/><path d="M17,569 C20,566 23,572 27,568 C29,566 31,567 31,567 M22,564 C20,568 24,571 22,575 M27,564 C25,567 28,571 27,575 M17,572 C21,570 25,575 31,571" fill="none" stroke="#c8c8c8" stroke-width="0.9"/>
<rect x="16.5" y="587.5" width="15" height="12" fill="url(#gGrad)" stroke="#c8c8c8" stroke-width="1"/>
<path d="M17.5,624 L18,621 L26,613 L28.5,615.5 L20.5,623.5 Z" fill="none" stroke="#c6c6c6" stroke-width="1.2"/><path d="M25,612 L28,609.5 C30,608 32,610 31,612 L28.5,615 Z" fill="#c6c6c6"/>
<path d="M36.5,623.5 V627 H33 Z" fill="#d8d8d8"/>
<rect x="15.5" y="634.5" width="8" height="8" fill="#8a8a8a" stroke="#c6c6c6" stroke-width="1"/><rect x="18.5" y="637.5" width="8" height="8" fill="#6a6a6a" stroke="#c6c6c6" stroke-width="1"/><circle cx="27.5" cy="644.5" r="4.6" fill="#5a5a5a" stroke="#c6c6c6" stroke-width="1.1"/>
<rect x="10" y="654" width="28" height="1" fill="#3a3a3a"/><rect x="10" y="655" width="28" height="1" fill="#545454"/>
<rect x="23.5" y="663.5" width="7" height="11" fill="none" stroke="#c6c6c6" stroke-width="1"/><rect x="25" y="660" width="4" height="3" fill="#c6c6c6"/><circle cx="27" cy="669.5" r="2" fill="none" stroke="#c6c6c6" stroke-width="1"/><path d="M15,661 H22 M16,663 H22 M15,665 H20" stroke="#c6c6c6" stroke-width="0.9" stroke-dasharray="1,1"/>
<path d="M36.5,674.5 V678 H33 Z" fill="#d8d8d8"/>
<path d="M16,684 V698 H32" fill="none" stroke="#c4c4c4" stroke-width="1.1"/><rect x="18" y="691" width="3" height="7" fill="none" stroke="#c4c4c4" stroke-width="0.9"/><rect x="22.5" y="686" width="3" height="12" fill="#8a8a8a" stroke="#c4c4c4" stroke-width="0.9"/><rect x="27" y="689" width="3" height="9" fill="none" stroke="#c4c4c4" stroke-width="0.9"/>
<path d="M36.5,697.5 V701 H33 Z" fill="#d8d8d8"/>
<rect x="10" y="704" width="28" height="1" fill="#3a3a3a"/><rect x="10" y="705" width="28" height="1" fill="#545454"/>
<rect x="18.5" y="712.5" width="11" height="10" fill="#6a6a6a" stroke="#c4c4c4" stroke-width="1"/><path d="M18.5,709 V712 M29.5,709 V712 M18.5,723 V727 M29.5,723 V727 M14,712.5 H18 M30,712.5 H34 M14,722.5 H18 M30,722.5 H34" stroke="#c4c4c4" stroke-width="1"/>
<path d="M16,748.5 L26,739 L31,735 L33,737 L29,743 L20,748 Z" fill="#c0c0c0"/><path d="M25,741 L28,744" stroke="#555" stroke-width="0.8"/>
<path d="M36.5,748.5 V752 H33 Z" fill="#d8d8d8"/>
<path d="M17,763 C16,760 18,759 19,761 L20,765 V758.5 C20,756.5 22.3,756.5 22.3,758.5 V764 V757 C22.3,755 24.8,755 24.8,757 V764 V758 C24.8,756 27.3,756 27.3,758 V765 L28.8,762 C30,760 32,761 31.3,763 L28.5,770 C27.5,772.5 26,773.5 23,773.5 C20,773.5 18.5,771 18,769 Z" fill="#c4c4c4"/>
<path d="M36.5,771.5 V775 H33 Z" fill="#d8d8d8"/>
<circle cx="22.5" cy="787" r="4.8" fill="#8a8a8a" stroke="#c6c6c6" stroke-width="1.6"/><path d="M26,790.5 L31,796" stroke="#c6c6c6" stroke-width="2.6" stroke-linecap="round"/>
<rect x="10" y="802" width="28" height="1" fill="#3a3a3a"/><rect x="10" y="803" width="28" height="1" fill="#545454"/>
<rect x="13.5" y="810.5" width="7" height="8" fill="#111" stroke="#c8c8c8" stroke-width="1"/><rect x="10.5" y="807.5" width="7" height="7" fill="#e6e6e6" stroke="#1a1a1a" stroke-width="1"/>
<path d="M30.5,810 H34.5 C36,810 36.5,811 36.5,812.5 V816" fill="none" stroke="#d0d0d0" stroke-width="1.1"/><path d="M29,810 L31.5,807.8 V812.2 Z M34.3,815.5 H38.7 L36.5,818 Z" fill="#d0d0d0"/>
<rect x="9.7" y="824.9" width="18.6" height="18.3" fill="#ffffff"/>
<rect x="19.2" y="834.3" width="19.5" height="18.9" fill="#ffffff"/><rect x="20.2" y="835.3" width="17.5" height="16.9" fill="#1a1a1a"/><rect x="23.2" y="838.3" width="11.5" height="10.9" fill="#ffffff"/><rect x="24.5" y="839.6" width="8.9" height="8.3" fill="#4a4a4a"/>
<rect x="10" y="860.3" width="28" height="9.2" fill="#1e1e1e"/><rect x="12.8" y="863" width="4" height="4" fill="#555"/><defs><linearGradient id="gMode" x1="0" y1="0" x2="1" y2="0"><stop offset="0" stop-color="#ffffff"/><stop offset="1" stop-color="#3a3a3a"/></linearGradient></defs><rect x="19.7" y="860.8" width="8.3" height="8.2" fill="url(#gMode)"/><rect x="28.6" y="860.8" width="8.6" height="8.2" fill="#ffffff"/><path d="M28.8,868.8 L37,861" stroke="#e8202a" stroke-width="1.6"/>
<circle cx="23.5" cy="883" r="4.5" fill="none" stroke="#bdbdbd" stroke-width="1.2"/><rect x="22.5" y="883" width="6.5" height="6.3" fill="#b8b8b8"/>
<rect x="15.5" y="905.5" width="11" height="8.5" fill="#6a6a6a" stroke="#c4c4c4" stroke-width="1"/><rect x="20.5" y="901.5" width="11" height="8.5" fill="#787878" stroke="#c4c4c4" stroke-width="1"/>
<rect x="1651" y="104" width="29" height="1" fill="#555"/>
<g fill="#1c1c1c"><rect x="1660" y="106" width="1" height="4"/><rect x="1662" y="106" width="1" height="4"/><rect x="1664" y="106" width="1" height="4"/><rect x="1666" y="106" width="1" height="4"/><rect x="1668" y="106" width="1" height="4"/><rect x="1670" y="106" width="1" height="4"/><rect x="1672" y="106" width="1" height="4"/><rect x="1674" y="106" width="1" height="4"/><rect x="1676" y="106" width="1" height="4"/><rect x="1678" y="106" width="1" height="4"/></g>
<g fill="#c8c8c8"><rect x="1662" y="121" width="18" height="1.6"/><rect x="1662" y="126" width="18" height="1.6"/><rect x="1662" y="131" width="18" height="1.8"/></g>
<rect x="1663.5" y="157" width="8" height="8.5" fill="#b8b8b8"/><path d="M1665,157 L1663,149 M1667.5,157 V147 M1669.5,157 L1673,151" stroke="#c8c8c8" stroke-width="1.4"/><circle cx="1667.5" cy="147.5" r="1.6" fill="#d0d0d0"/><path d="M1662,148 L1665,150 L1663,152 Z M1672,149.5 L1675,150.5 L1673,153 Z" fill="#c8c8c8"/>
<rect x="1651" y="171" width="29" height="2" fill="#2c2c2c"/><rect x="1651" y="173" width="29" height="1" fill="#555"/>
<g fill="#1c1c1c"><rect x="1660" y="176" width="1" height="4"/><rect x="1662" y="176" width="1" height="4"/><rect x="1664" y="176" width="1" height="4"/><rect x="1666" y="176" width="1" height="4"/><rect x="1668" y="176" width="1" height="4"/><rect x="1670" y="176" width="1" height="4"/><rect x="1672" y="176" width="1" height="4"/><rect x="1674" y="176" width="1" height="4"/><rect x="1676" y="176" width="1" height="4"/><rect x="1678" y="176" width="1" height="4"/></g>
<rect x="1662.5" y="191.5" width="16" height="11" fill="#c8c8c8"/><g fill="#3a3a3a"><rect x="1663.5" y="192.5" width="4" height="4"/></g><g fill="#777"><rect x="1668.5" y="192.5" width="4.5" height="4"/><rect x="1674" y="192.5" width="4" height="4"/><rect x="1663.5" y="197.5" width="4" height="4"/><rect x="1668.5" y="197.5" width="4.5" height="4"/></g><rect x="1674" y="197.5" width="4" height="4" fill="#3a3a3a"/>
<path d="M1662.5,218.5 H1667 L1668.5,220.5 H1680 V233.5 H1662.5 Z" fill="none" stroke="#c8c8c8" stroke-width="1"/><rect x="1664.5" y="224.5" width="14" height="4" fill="#c8c8c8"/><g fill="#3a3a3a"><rect x="1665.5" y="225.5" width="2.5" height="2"/><rect x="1669.5" y="225.5" width="2.5" height="2"/><rect x="1673.5" y="225.5" width="2.5" height="2"/></g>
<path d="M1661,255 C1661,248 1670,245 1677,246.5 C1683,248 1683,252 1680,254 C1677,256 1679,259 1675,260 C1668,261.5 1661,260 1661,255 Z" fill="#c4c4c4"/><g fill="#3a3a3a"><circle cx="1666" cy="256.5" r="1.4"/><circle cx="1670" cy="258" r="1.4"/><circle cx="1674.5" cy="257.5" r="1.4"/><circle cx="1672" cy="249.5" r="1.4"/><circle cx="1677" cy="250" r="1.2"/></g>
<rect x="1651" y="268" width="29" height="2" fill="#2c2c2c"/><rect x="1651" y="270" width="29" height="1" fill="#555"/>
<g fill="#1c1c1c"><rect x="1660" y="273" width="1" height="4"/><rect x="1662" y="273" width="1" height="4"/><rect x="1664" y="273" width="1" height="4"/><rect x="1666" y="273" width="1" height="4"/><rect x="1668" y="273" width="1" height="4"/><rect x="1670" y="273" width="1" height="4"/><rect x="1672" y="273" width="1" height="4"/><rect x="1674" y="273" width="1" height="4"/><rect x="1676" y="273" width="1" height="4"/><rect x="1678" y="273" width="1" height="4"/></g>
<text x="1663" y="301" font-family="Liberation Serif" font-style="italic" font-size="19" fill="#c8c8c8">A</text>
<text x="1663" y="328.5" font-family="Liberation Sans" font-size="16" fill="#c8c8c8">A</text><rect x="1677" y="315" width="1" height="14" fill="#c8c8c8"/>
<circle cx="1668" cy="346.5" r="5.8" fill="#bdbdbd"/><circle cx="1672.5" cy="351.5" r="6" fill="none" stroke="#c8c8c8" stroke-width="1.4"/><path d="M1667,351 A6,6 0 0 0 1673,346" fill="none" stroke="#888" stroke-width="0.9"/>
<path d="M1663,370.5 V384.5 L1680,377.5 Z" fill="#c4c4c4"/>
<rect x="1662.5" y="399.5" width="18" height="11.5" fill="url(#gGrad)" stroke="#c8c8c8" stroke-width="1"/>
<path d="M1662,431 L1671,425 L1680,431 L1671,437 Z" fill="#c8c8c8"/><path d="M1662,436 L1664.5,434.5 L1671,439 L1677.5,434.5 L1680,436 L1671,442.5 Z" fill="#c8c8c8"/>
<rect x="1651" y="450" width="29" height="1.2" fill="#262626"/>
</g><g id="menubar">
<rect x="0" y="0" width="1680" height="22" fill="url(#gMenu)"/>
<rect x="0" y="20.5" width="1680" height="1" fill="#e6e6e6"/><rect x="0" y="21.5" width="1680" height="2" fill="#000"/>
<!-- apple -->
<path d="M30.2,10.6 C30.2,8.6 31.8,7.7 31.9,7.6 C31,6.3 29.6,6.1 29.1,6.1 C27.9,6 26.8,6.8 26.2,6.8 C25.6,6.8 24.7,6.1 23.7,6.1 C22.4,6.1 21.2,6.9 20.5,8.1 C19.1,10.5 20.1,14.1 21.5,16.1 C22.2,17.1 23,18.2 24,18.1 C25,18.1 25.3,17.5 26.5,17.5 C27.7,17.5 28,18.1 29,18.1 C30.1,18.1 30.7,17.1 31.4,16.1 C32.2,15 32.5,13.9 32.5,13.8 C32.5,13.8 30.2,12.9 30.2,10.6 Z M28.3,4.7 C28.8,4 29.2,3.1 29.1,2.2 C28.3,2.2 27.3,2.7 26.8,3.4 C26.3,4 25.8,4.9 26,5.8 C26.8,5.9 27.7,5.4 28.3,4.7 Z" fill="#111"/>
<text x="54.3" y="16" font-size="14" font-weight="bold" fill="#111" textLength="67" lengthAdjust="spacingAndGlyphs">Illustrator</text>
<g font-size="14" fill="#111">
<text x="140.7" y="16" textLength="21.4" lengthAdjust="spacingAndGlyphs">File</text>
<text x="181.4" y="16" textLength="24.3" lengthAdjust="spacingAndGlyphs">Edit</text>
<text x="225" y="16" textLength="43" lengthAdjust="spacingAndGlyphs">Object</text>
<text x="287" y="16" textLength="30" lengthAdjust="spacingAndGlyphs">Type</text>
<text x="336.3" y="16" textLength="40" lengthAdjust="spacingAndGlyphs">Select</text>
<text x="395" y="16" textLength="37" lengthAdjust="spacingAndGlyphs">Effect</text>
<text x="451.3" y="16" textLength="30" lengthAdjust="spacingAndGlyphs">View</text>
<text x="500" y="16" textLength="52" lengthAdjust="spacingAndGlyphs">Window</text>
<text x="571.3" y="16" textLength="30" lengthAdjust="spacingAndGlyphs">Help</text>
<text x="1426" y="16" textLength="62.7" lengthAdjust="spacingAndGlyphs">Tue 12:30</text>
</g>
<text x="1506" y="16" font-size="14" font-weight="bold" fill="#111" textLength="80" lengthAdjust="spacingAndGlyphs">Ben O'Brien</text>
<!-- status icons -->
<g fill="none" stroke="#111">
<rect x="1161.5" y="5.5" width="15" height="11" rx="1" stroke-width="1.6"/>
<path d="M1162,6.5 L1169,12 L1176,6.5" stroke-width="1.4"/>
<circle cx="1198" cy="10.8" r="7.2" stroke-width="1.5"/>
<circle cx="1198" cy="10.8" r="3.2" stroke-width="1.2"/>
<path d="M1195,8 L1192.5,4.5 M1201.5,8.5 L1205,6 M1200.5,13.8 L1201,18 M1194.5,13 L1191,14.5 M1198.5,7.5 L1197,3.6 M1201,11.5 L1205,13" stroke-width="1.1"/>
</g>
<path d="M1220.5,4 H1223 V6 H1225 V4 H1227.5 V6 H1229.5 V4 H1232 V18 H1220.5 Z" fill="#111"/>
<rect x="1222.5" y="8.5" width="7.5" height="8" fill="#e0e0e0"/><rect x="1223.5" y="10" width="1.2" height="2" fill="#111"/><rect x="1227" y="10" width="1.2" height="2" fill="#111"/>
<path d="M1246,12 C1245,8 1249,5.5 1252,7 C1254,4 1259,4.5 1260.5,8 C1264,8 1265,12 1263,14 H1249 C1246.5,14 1246,13 1246,12 Z" fill="none" stroke="#111" stroke-width="1.6"/>
<circle cx="1252" cy="11" r="2" fill="none" stroke="#111" stroke-width="1.3"/>
<circle cx="1260.5" cy="13" r="4.2" fill="#cc0a0a"/>
<g fill="none" stroke="#9a9a9a" stroke-width="1.4">
<path d="M1279,8.5 A7,7 0 1 1 1278,13"/>
<path d="M1285.5,6.5 V10.8 L1288.5,13"/>
<path d="M1310,7 L1318,14 L1314,17.5 V3.5 L1318,7 L1310,14"/>
</g>
<path d="M1276,11 L1279,8 L1281,11.5 Z" fill="#9a9a9a"/>
<path d="M1335.5,8 C1341,2.5 1348,2.5 1353.5,8 L1344.5,17.5 Z" fill="none" stroke="#111" stroke-width="1.5" stroke-linejoin="round"/>
<path d="M1365,8 H1368 L1372,4.5 V17 L1368,13.5 H1365 Z" fill="#111"/>
<path d="M1375,8 C1376.5,9.5 1376.5,12 1375,13.5" fill="none" stroke="#111" stroke-width="1.2"/>
<rect x="1397.5" y="4.5" width="15" height="13" rx="1.5" fill="none" stroke="#111" stroke-width="1.4"/>
<rect x="1398" y="5" width="14" height="2.2" fill="#111"/>
<g fill="#111"><rect x="1400" y="10" width="1" height="1"/><rect x="1400" y="12" width="1" height="1"/><rect x="1400" y="14" width="1" height="1"/></g>
<text x="1403.5" y="15.5" font-size="8" fill="#111">⌘</text>
<circle cx="1615" cy="9.5" r="4.6" fill="none" stroke="#111" stroke-width="1.5"/>
<path d="M1618.3,12.8 L1622.5,17" stroke="#111" stroke-width="1.8"/>
<g fill="#111"><rect x="1639" y="6" width="2" height="1.6"/><rect x="1639" y="10" width="2" height="1.6"/><rect x="1639" y="14" width="2" height="1.6"/><rect x="1643" y="6" width="14" height="1.6"/><rect x="1643" y="10" width="14" height="1.6"/><rect x="1643" y="14" width="14" height="1.6"/></g>
</g>
</svg>
</body></html>
